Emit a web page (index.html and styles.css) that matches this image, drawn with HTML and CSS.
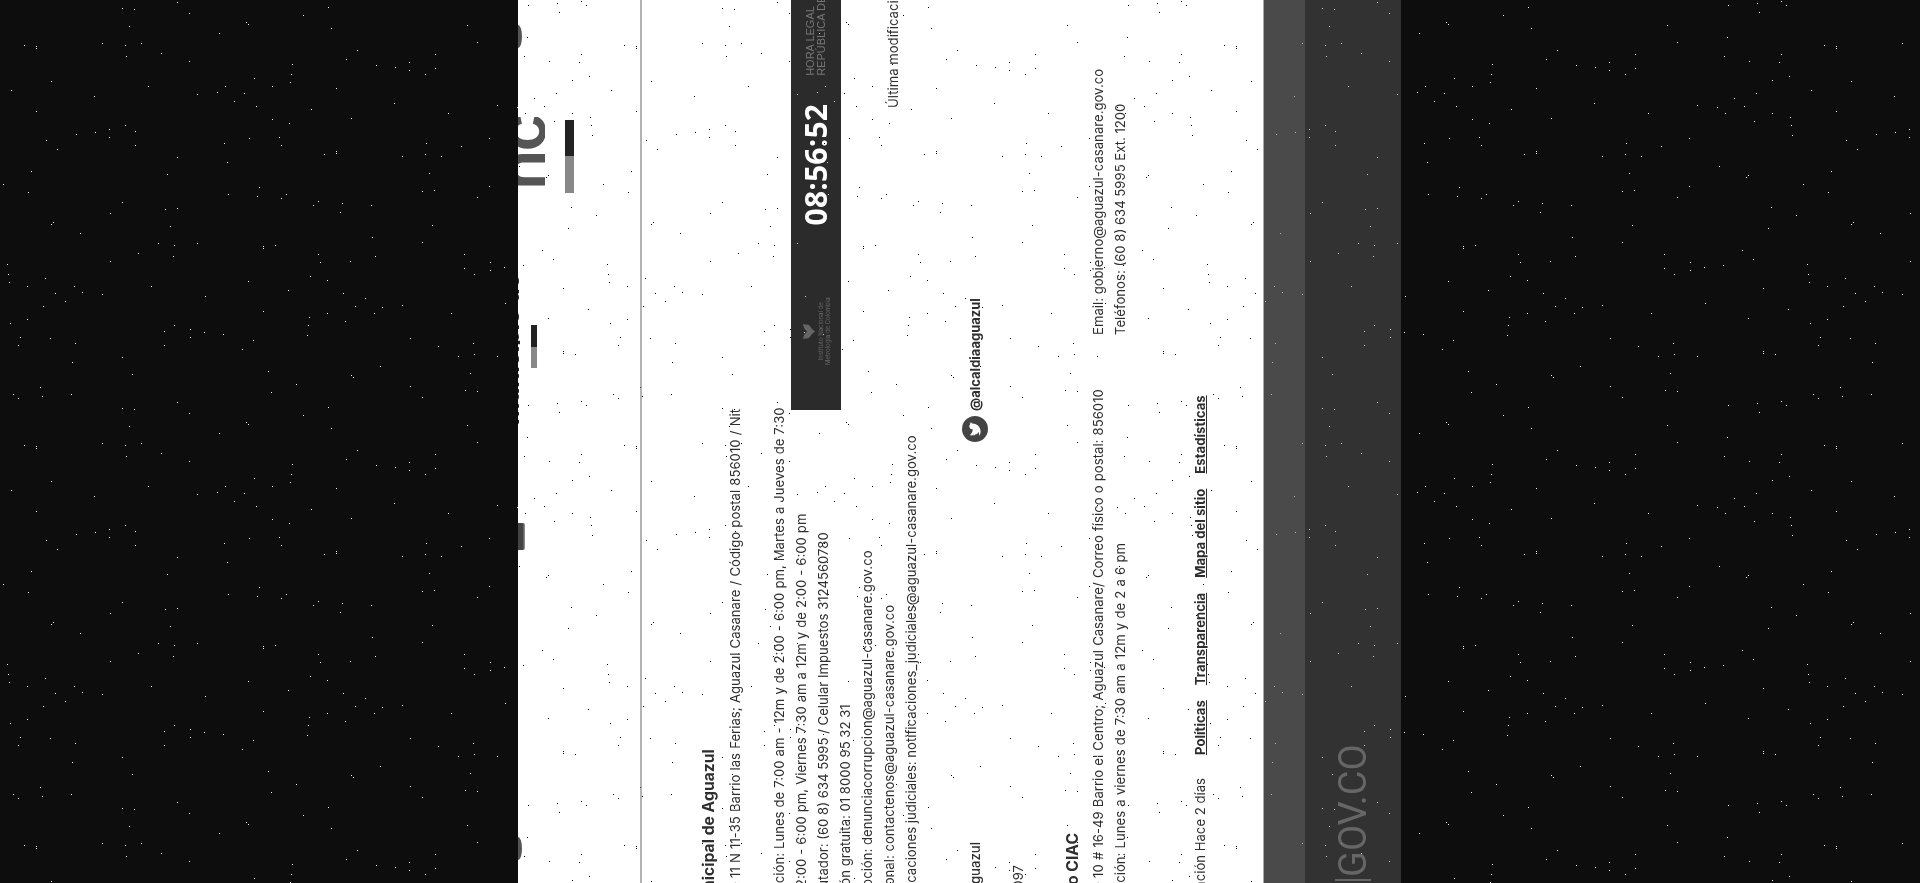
FILE: index.html
```html
<!DOCTYPE html>
<html lang="es">
<head>
    <meta charset="UTF-8">
    <title>Alcaldía de Aguazul</title>
    <link rel="stylesheet" href="styles.css">
</head>
<body>
    <div class="screen">
        <div class="page">
            <header class="top">
                <div class="blob blob-a"></div>
                <div class="stub"></div>
                <div class="brand">
                    <div class="cut"><span>Municipio de</span></div>
                    <div class="bar bar-small"></div>
                </div>
                <div class="brand-big">
                    <div class="big"><span>nc</span></div>
                    <div class="bar bar-large"></div>
                </div>
                <div class="blob blob-b"></div>
            </header>

            <main class="content">
                <section class="address">
                    <div>
                        <h2>Alcaldía Municipal de Aguazul</h2>
                        <p class="wide">Dirección: Calle 11 N 11-35 Barrio las Ferias; Aguazul Casanare / Código postal 856010 / Nit<br>800103720-1</p>
                        <p class="snug">Horario de atención: Lunes de 7:00 am - 12m y de 2:00 - 6:00 pm, Martes a Jueves de 7:30<br>am - 12m y de 2:00 - 6:00 pm, Viernes 7:30 am a 12m y de 2:00 - 6:00 pm</p>
                        <p>Teléfono conmutador: (60 8) 634 5995 / Celular Impuestos 3124560780</p>
                        <p>Línea de atención gratuita: 01 8000 95 32 31</p>
                        <p>Línea anticorrupción: denunciacorrupcion@aguazul-casanare.gov.co</p>
                        <p>Correo institucional: contactenos@aguazul-casanare.gov.co</p>
                        <p>Correo de notificaciones judiciales: notificaciones_judiciales@aguazul-casanare.gov.co</p>
                    </div>
                    <div>
                        <div class="clock">
                            <div class="inm">
                                <svg class="inm-icon" viewBox="0 0 15 15"><path d="M0 2l4 1 3.5 3L11 3l4-1-1 6-4 3-2.500 3L5 11 1 8z"/></svg>
                                <span>Instituto Nacional de<br>Metrología de Colombia</span>
                            </div>
                            <div class="time">08:56:52</div>
                            <div class="legal">HORA LEGAL<br>REPÚBLICA DE COLOMBIA</div>
                        </div>
                        <p class="modified">Última modificación</p>
                    </div>
                </section>

                <section class="social">
                    <strong class="social-left">Alcaldía de Aguazul</strong>
                    <svg class="tw" viewBox="0 0 26 26">
                        <circle cx="13" cy="13" r="13" fill="#444"/>
                        <path fill="#fff" transform="translate(6 6) scale(.58)" d="M23.95 4.57a10 10 0 01-2.82.77 4.96 4.96 0 002.16-2.72c-.95.55-2 .95-3.12 1.17a4.92 4.92 0 00-8.38 4.48C7.69 8.1 4.07 6.13 1.64 3.16a4.82 4.82 0 00-.67 2.48c0 1.71.87 3.21 2.19 4.1a4.9 4.9 0 01-2.23-.62v.06a4.92 4.92 0 003.95 4.83 5 5 0 01-2.21.08 4.94 4.94 0 004.6 3.42A9.87 9.87 0 010 19.54a14 14 0 007.56 2.21c9.05 0 14-7.5 14-13.98 0-.21 0-.42-.02-.63a9.94 9.94 0 002.46-2.55z"/>
                    </svg>
                    <strong class="handle">@alcaldiaaguazul</strong>
                </section>

                <p class="code">Código 097</p>

                <section class="ciac">
                    <div>
                        <h2>Centro CIAC</h2>
                        <p class="wide">Dirección: Calle 10 # 16-49 Barrio el Centro; Aguazul Casanare/ Correo físico o postal: 856010</p>
                        <p class="wide">Horario de atención: Lunes a viernes de 7:30 am a 12m y de 2 a 6 pm</p>
                    </div>
                    <div class="ciac-contact">
                        <p>Email: gobierno@aguazul-casanare.gov.co</p>
                        <p>Teléfonos: (60 8) 634 5995 Ext. 1200</p>
                    </div>
                </section>

                <nav class="links">
                    <span class="updated">Última actualización Hace 2 días</span>
                    <a href="#">Políticas</a>
                    <a href="#">Transparencia</a>
                    <a href="#">Mapa del sitio</a>
                    <a href="#">Estadísticas</a>
                </nav>
            </main>

            <div class="band"></div>
            <footer class="bottom"><span class="pipe"></span><span class="govco">GOV.CO</span></footer>
        </div>
    </div>

    <svg class="noise" width="1920" height="883">
        <defs>
            <path id="speck" fill="#fff" d="M122 8h1v1h-1zM134 9h1v1h-1zM177 2h1v1h-1zM189 13h1v1h-1zM129 26h1v1h-1zM24 45h1v1h-1zM36 46h1v1h-1zM36 48h1v1h-1zM102 43h1v1h-1zM125 45h1v1h-1zM141 43h1v1h-1zM126 56h1v1h-1zM161 53h1v1h-1zM189 61h1v1h-1zM219 33h1v1h-1zM246 22h1v1h-1zM248 24h1v1h-1zM292 64h1v1h-1zM291 74h1v1h-1zM290 82h1v1h-1zM254 78h1v1h-1zM272 86h1v1h-1zM225 86h1v1h-1zM217 92h1v1h-1zM197 94h1v1h-1zM244 93h1v1h-1zM234 101h1v1h-1zM256 106h1v1h-1zM272 119h1v1h-1zM289 123h1v1h-1zM51 81h1v1h-1zM11 90h1v1h-1zM94 96h1v1h-1zM36 111h1v1h-1zM148 86h1v1h-1zM76 134h1v1h-1zM95 132h1v1h-1zM109 129h1v1h-1zM109 137h1v1h-1zM125 125h1v1h-1zM135 131h1v1h-1zM135 145h1v1h-1zM46 140h1v1h-1zM57 149h1v1h-1zM224 143h1v1h-1zM249 138h1v1h-1zM279 137h1v1h-1zM281 145h1v1h-1zM177 157h1v1h-1zM227 162h1v1h-1zM167 174h1v1h-1zM31 171h1v1h-1zM3 184h1v1h-1zM28 192h1v1h-1zM259 187h1v1h-1zM228 194h1v1h-1zM257 196h1v1h-1zM286 194h1v1h-1zM281 198h1v1h-1z"/>
            <pattern id="dots" width="600" height="400" patternUnits="userSpaceOnUse">
                <use href="#speck"/>
                <use href="#speck" transform="translate(300 200) scale(1 -1)"/>
                <use href="#speck" transform="translate(300 200) scale(-1 1)"/>
                <use href="#speck" transform="translate(600 400) scale(-1 -1)"/>
            </pattern>
        </defs>
        <rect width="1920" height="883" fill="url(#dots)"/>
    </svg>
</body>
</html>
```

FILE: styles.css
```css
html, body {
    margin: 0;
    padding: 0;
    height: 100%;
    overflow: hidden;
}

body {
    background-color: #0d0d0d;
    font-family: 'Inter', 'Liberation Sans', sans-serif;
    color: #2e2e2e;
}

h2, p {
    margin: 0;
}

/* the whole page is shown lying on its side */
.screen {
    width: 883px;
    height: 883px;
    margin-left: 518px;
    overflow: hidden;
}

.page {
    width: 883px;
    height: 883px;
    background-color: #fff;
    overflow: hidden;
    transform-origin: 0 0;
    transform: translateY(883px) rotate(-90deg);
}

/* header, only a slice is visible */
.top {
    display: flex;
    align-items: flex-start;
    height: 122px;
    border-bottom: 2px solid #b3b3b3;
}

.blob {
    width: 23px;
    height: 4px;
    background-color: #555;
    border-radius: 0 0 50% 50% / 0 0 100% 100%;
}

.blob-a {
    margin-left: 23px;
}

.blob-b {
    margin-left: 69px;
}

.stub {
    width: 27px;
    height: 7px;
    margin-left: 287px;
    background: linear-gradient(#444 65%, #999);
    border-radius: 0 0 2px 2px;
}

.brand {
    width: 155px;
    margin-left: 98px;
}

.cut {
    height: 2px;
    overflow: hidden;
    color: #222;
    font-weight: 700;
    font-size: 24px;
    white-space: nowrap;
}

.cut span {
    display: block;
    line-height: 24px;
    margin-top: -19px;
}

.bar {
    background: linear-gradient(to right, #888 50%, #222 50%);
}

.bar-small {
    width: 43px;
    height: 6px;
    margin: 11px 0 0 57px;
}

.brand-big {
    margin-left: 77px;
    width: 76px;
}

.big {
    height: 27px;
    margin-left: 3px;
    overflow: hidden;
    color: #555;
    font-size: 66px;
    font-weight: 600;
    letter-spacing: -2px;
}

.big span {
    display: block;
    line-height: 66px;
    margin-top: -30px;
}

.bar-large {
    width: 73px;
    height: 9px;
    margin-top: 20px;
}

/* main text, starts left of the visible part */
.content {
    height: 621px;
    box-sizing: border-box;
    width: 980px;
    margin-left: -97px;
    padding-top: 56px;
    font-size: 13.15px;
    line-height: 22px;
    white-space: nowrap;
}

.content h2 {
    font-size: 15.7px;
    line-height: 22px;
    font-weight: 700;
    margin-bottom: 4px;
}

.wide {
    word-spacing: .5px;
}

.snug {
    word-spacing: .3px;
}

.address {
    display: grid;
    grid-template-columns: 570px 410px;
    height: 224px;
}

.clock {
    display: flex;
    align-items: center;
    height: 50px;
    margin-top: 93px;
    padding-left: 45px;
    background-color: #2b2b2b;
}

.inm {
    width: 75px;
    color: #666;
    font-size: 6px;
    line-height: 7px;
    text-align: center;
}

.inm span {
    display: block;
}

.inm-icon {
    display: block;
    width: 15px;
    height: 15px;
    margin: 0 auto 1px;
    fill: #666;
}

.time {
    margin-left: 72px;
    color: #fff;
    font-family: 'Open Sans', sans-serif;
    font-size: 30px;
    font-weight: 700;
    letter-spacing: .2px;
    line-height: 50px;
}

.legal {
    margin-left: 28px;
    color: #777;
    font-family: 'Liberation Sans', sans-serif;
    font-size: 11px;
    line-height: 11px;
}

.modified {
    margin: 41px 0 0 302px;
}

.social {
    display: flex;
    align-items: center;
    height: 26px;
    margin-top: 40px;
}

.social-left {
    width: 138px;
    text-align: right;
    font-weight: 500;
}

.tw {
    width: 26px;
    height: 26px;
    margin-left: 400px;
}

.handle {
    margin-left: 5px;
    font-size: 13px;
}

.code {
    width: 115px;
    margin-top: 19px;
    text-align: right;
}

.ciac {
    display: grid;
    grid-template-columns: 645px 1fr;
    margin-top: 33px;
}

.ciac h2 {
    margin-bottom: 3px;
    width: 147px;
    text-align: right;
}

.ciac-contact {
    padding-top: 25px;
}

.links {
    display: flex;
    gap: 15px;
    margin-top: 58px;
}

.updated {
    width: 202px;
    text-align: right;
    margin-right: 8px;
}

.links a {
    color: #2e2e2e;
    font-weight: 700;
}

/* dark strips at the end of the page */
.band {
    height: 41px;
    border-top: 1px solid #a8a8a8;
    background-color: #4a4a4a;
}

.bottom {
    display: flex;
    align-items: center;
    height: 96px;
    background-color: #323232;
    color: #666;
}

.pipe {
    width: 2px;
    height: 36px;
    margin: 0 2px 0 2px;
    background-color: #666;
}

.govco {
    font-family: 'Roboto', sans-serif;
    font-size: 38px;
    line-height: 38px;
}

/* speckle over everything */
.noise {
    position: absolute;
    left: 0;
    top: 0;
    mix-blend-mode: difference;
    pointer-events: none;
}
```
